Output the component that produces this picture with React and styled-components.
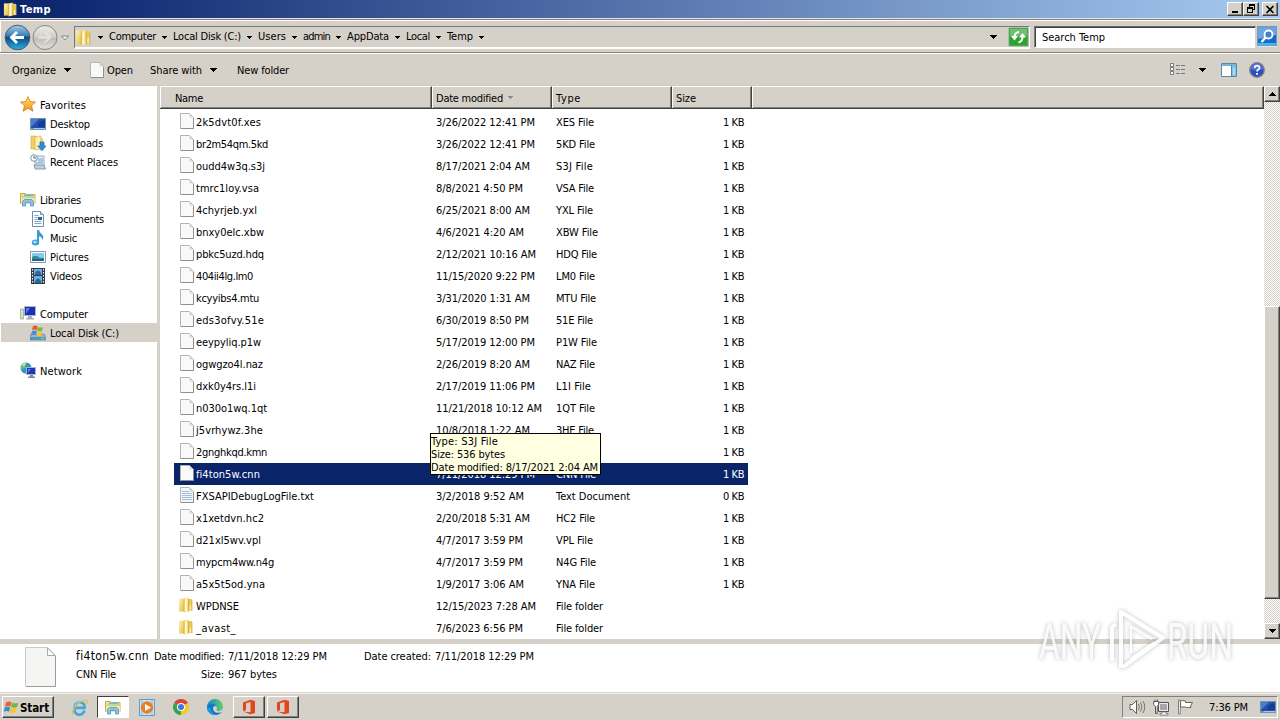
import React, { useLayoutEffect, useRef } from "react";
import styled, { createGlobalStyle, css } from "styled-components";

const face = "#d5d0c8";

const Global = createGlobalStyle`
  * { box-sizing: border-box; }
  html, body { margin: 0; padding: 0; overflow: hidden; }
  body { font-family: "DejaVu Sans Condensed", "DejaVu Sans", sans-serif; font-size: 11px; color: #000; background: ${face}; }
  svg { display: block; flex: none; }
`;

const raised = css`
  background: ${face};
  border: 1px solid;
  border-color: #fff #404040 #404040 #fff;
  box-shadow: inset -1px -1px 0 #808080;
`;

const Screen = styled.div`
  position: relative;
  width: 1280px;
  height: 720px;
  display: flex;
  flex-direction: column;
  overflow: hidden;
  background: ${face};
`;

const Label = styled.span`
  display: inline-block;
  flex: none;
  white-space: pre;
  line-height: ${(p) => (p.$up ? 14 : 16)}px;
  height: 14px;
  width: ${(p) => p.$w}px;
  font-size: ${(p) => p.$size || 11}px;
  font-weight: ${(p) => (p.$bold ? 700 : 400)};
`;

/* Spreads the characters so the string fills exactly `w` pixels. */
function Text({ w, size, bold, up, children }) {
  const ref = useRef(null);
  useLayoutEffect(() => {
    const el = ref.current;
    el.style.letterSpacing = "0px";
    const range = document.createRange();
    range.selectNodeContents(el);
    const natural = range.getBoundingClientRect().width;
    el.style.letterSpacing = `${(w - natural) / children.length}px`;
  }, [w, children]);
  return <Label ref={ref} $w={w} $size={size} $bold={bold} $up={up}>{children}</Label>;
}

/* ---------- title bar ---------- */
const TitleBar = styled.header`
  height: 18px;
  flex: none;
  display: flex;
  align-items: center;
  padding: 0 2px 0 3px;
  color: #fff;
  background: linear-gradient(90deg, #0a246a 0%, #0f2a72 6%, #a6caf0 100%);
`;
const TitleText = styled.div`flex: 1; padding-left: 2px; display: flex;`;
const WindowButton = styled.div`
  ${raised}
  width: 16px;
  height: 14px;
  margin-left: ${(p) => p.$gap || 0}px;
  display: flex;
  align-items: center;
  justify-content: center;
`;

/* ---------- navigation ---------- */
const NavBar = styled.div`
  height: 36px;
  flex: none;
  display: flex;
  align-items: flex-start;
  border-top: 1px solid #e8e6e2;
  border-bottom: 1px solid #fff;
  box-shadow: inset 0 1px 0 #808080, inset 0 2px 0 #fff, inset 0 -1px 0 #85837e, inset 1px 0 0 #fff;
  padding: 5px 2px 0 4px;
`;
const NavButtons = styled.div`display: flex; align-items: center; gap: 1px; width: 70px; height: 27px;`;
const AddressBar = styled.div`
  width: 956px;
  height: 23px;
  margin-top: 2px;
  display: flex;
  align-items: center;
  border: 1px solid;
  border-color: #73797b #fff #fff #73797b;
  border-bottom-width: 2px;
`;
const CrumbArrow = styled.div`
  width: ${(p) => p.$w || 17}px;
  flex: none;
  display: flex;
  justify-content: center;
`;
const Spacer = styled.div`flex: 1;`;
const SearchBox = styled.div`
  width: 222px;
  height: 22px;
  margin: 2px 1px 0 4px;
  padding-left: 7px;
  display: flex;
  align-items: center;
  background: #fff;
  border: 1px solid;
  border-color: #666 #d4d0c8 #fff #808080;
  box-shadow: inset 1px 1px 0 #404040;
`;
const SearchButton = styled.div`margin-top: 2px;`;

/* ---------- command bar ---------- */
const CommandBar = styled.div`
  height: 32px;
  flex: none;
  display: flex;
  align-items: center;
  padding: 0 15px 0 12px;
  border-bottom: 1px solid #cfcbc3;
`;
const Command = styled.div`
  display: flex;
  align-items: center;
  gap: ${(p) => p.$gap || 0}px;
  margin-right: ${(p) => p.$after || 0}px;
`;

/* ---------- body ---------- */
const Body = styled.main`display: flex; height: 553px; flex: none; background: #fff;`;
const Sidebar = styled.nav`
  width: 160px;
  flex: none;
  padding: 9px 0 0 1px;
  border-right: 3px solid ${face};
`;
const TreeItem = styled.div`
  height: 19px;
  display: flex;
  align-items: center;
  gap: 4px;
  padding-left: ${(p) => (p.$child ? 29 : 19)}px;
  background: ${(p) => (p.$selected ? "#d5d0c8" : "transparent")};
  & > svg { margin-bottom: ${(p) => (p.$child ? 0 : 1)}px; }
`;
const FilePane = styled.section`width: 1104px; flex: none; display: flex; flex-direction: column;`;
const HeaderRow = styled.div`
  display: flex;
  height: 23px;
  flex: none;
  background: ${face};
  border-bottom: 1px solid #404040;
  box-shadow: inset 0 -1px 0 #808080;
`;
const HeaderCell = styled.div`
  width: ${(p) => p.$w}px;
  padding: 1px 0 1px ${(p) => p.$pad || 4}px;
  display: flex;
  align-items: center;
  gap: 5px;
  border: solid;
  border-width: 1px 1px 0 1px;
  border-color: #fff #404040 #404040 #fff;
  box-shadow: inset -1px -1px 0 #808080;
`;
const Rows = styled.div`padding: 2px 0 0 14px; flex: 1;`;
const FileRow = styled.div`
  display: flex;
  align-items: center;
  width: 574px;
  height: 22px;
  padding-left: 4px;
  color: ${(p) => (p.$selected ? "#fff" : "#000")};
  background: ${(p) => (p.$selected ? "#0a246a" : "transparent")};
`;
const NameCell = styled.div`
  width: 258px;
  display: flex;
  align-items: center;
`;
const IconSlot = styled.div`
  width: 18px;
  flex: none;
  display: flex;
  padding: 0 0 2px ${(p) => p.$inset || 0}px;
`;
const DateCell = styled.div`width: 120px; display: flex;`;
const TypeCell = styled.div`width: 120px; display: flex;`;
const SizeCell = styled.div`flex: 1; display: flex; justify-content: flex-end; padding-right: 4px;`;

const ScrollBar = styled.div`
  width: 16px;
  display: flex;
  flex-direction: column;
  background: conic-gradient(#fff 25%, #d4d0c8 0 50%, #fff 0 75%, #d4d0c8 0) 0 0 / 2px 2px;
`;
const ScrollButton = styled.div`
  ${raised}
  height: 16px;
  display: flex;
  align-items: center;
  justify-content: center;
`;
const TrackAbove = styled.div`height: 204px;`;
const Thumb = styled.div`${raised} height: 293px;`;

/* ---------- details ---------- */
const Details = styled.section`
  height: 54px;
  flex: none;
  display: flex;
  background: #fff;
  border-top: 5px solid ${face};
  border-bottom: 1px solid #d8d4cc;
  padding-left: 25px;
`;
const DetailIcon = styled.div`width: 51px; padding-top: 3px;`;
const DetailColumn = styled.div`
  display: flex;
  flex-direction: column;
  align-items: ${(p) => (p.$end ? "flex-end" : "flex-start")};
  gap: 4px;
  padding-top: 5px;
  width: ${(p) => p.$w}px;
`;
const DetailLine = styled.div`display: flex; height: 14px; gap: 4px;`;
const DetailLineTop = styled(DetailLine)`padding-top: 5px;`;
const DetailValue = styled.div`padding-left: 4px; height: 14px; display: flex;`;

/* ---------- taskbar ---------- */
const Taskbar = styled.footer`
  height: 27px;
  flex: none;
  display: flex;
  align-items: center;
  border-top: 1px solid #f6f4f1;
  padding: 0 2px 0 2px;
`;
const StartButton = styled.div`
  ${raised}
  width: 52px;
  height: 22px;
  display: flex;
  align-items: center;
  padding-left: 1px;
  gap: 1px;
  margin-right: 9px;
`;
const TaskButton = styled.div`
  width: 32px;
  height: 22px;
  margin-right: 2px;
  display: flex;
  align-items: center;
  justify-content: center;
  ${(p) => p.$kind === "raised" && raised}
  ${(p) => p.$kind === "pressed" && css`
    background: #fff;
    border: 1px solid;
    border-color: #404040 #fff #fff #404040;
  `}
`;
const Tray = styled.div`
  width: 156px;
  height: 22px;
  display: flex;
  align-items: center;
  padding-left: 6px;
  border: 1px solid;
  border-color: #808080 #fff #fff #808080;
`;
const TrayItem = styled.div`width: ${(p) => p.$w}px; display: flex;`;

/* ---------- overlays ---------- */
const Tooltip = styled.div`
  position: absolute;
  left: 430px;
  top: 433px;
  width: 171px;
  height: 42px;
  display: flex;
  flex-direction: column;
  border: 1px solid #000;
  background: #ffffe1;
`;
const TipLine = styled.div`height: 13px; display: flex;`;
const Watermark = styled.div`position: absolute; left: 1030px; top: 600px;`;

/* ---------- icons ---------- */
const Triangle = ({ color = "#000", s = 7 }) => {
  const h = (s + 1) / 2;
  return (
    <svg width={s} height={h} shapeRendering="crispEdges">
      {Array.from({ length: h }, (_, i) => (
        <rect key={i} x={i} y={i} width={s - 2 * i} height="1" fill={color} />
      ))}
    </svg>
  );
};
const FolderIcon = ({ s = 16 }) => (
  <svg width={s} height={s} viewBox="0 0 16 16">
    <defs>
      <linearGradient id="folder" x1="0" y1="0" x2="1" y2="1">
        <stop offset="0" stopColor="#fdf3b0" /><stop offset="1" stopColor="#e2bc3d" />
      </linearGradient>
    </defs>
    <path d="M1 1.500h6v13H1z" fill="url(#folder)" />
    <path d="M6 1.500L10.500.500v14L6 15.500z" fill="#f5df7d" />
    <path d="M10 2h4v12h-4z" fill="#e9cb5c" />
    <path d="M7 2.500l1.800-.4v12.200L7 14.800z" fill="#fffbe0" />
    <path d="M6 2v13M10.500 2v12.500M14 3v11" stroke="#d0a93c" strokeWidth=".7" />
    <path d="M11.800 8.500h1.200v5h-1.200z" fill="#fff4bd" />
  </svg>
);
const FileIcon = ({ lines }) => (
  <svg width="14" height="16" viewBox="0 0 14 16">
    <path d="M.5.500h9l4 4v11H.5z" fill={lines ? "#f1f6fb" : "#f9f9f9"} stroke="#b4b4b4" />
    <path d="M1 15.500h12.500V5" fill="none" stroke="#8f8f8f" />
    <path d="M9.500 1v3.500H13z" fill="#d5d5d5" />
    {lines && <path d="M2 4.500h7M2 6.500h10M2 8.500h10M2 10.500h10M2 12.500h10" stroke="#a4bed4" />}
  </svg>
);
const BigFile = () => (
  <svg width="32" height="41" viewBox="0 0 32 41">
    <path d="M.5.500h22l8 8v31H.5z" fill="#f5f5f4" stroke="#c9c9c7" />
    <path d="M1 39.500h29.500V9" fill="none" stroke="#9c9c9a" />
    <path d="M22.500 1v7.500h7.500z" fill="#fff" stroke="#a8a8a6" />
  </svg>
);
const BackIcon = () => (
  <svg width="27" height="27" viewBox="0 0 27 27">
    <defs>
      <linearGradient id="back" x1="0" y1="0" x2="0" y2="1">
        <stop offset="0" stopColor="#a5cbe4" /><stop offset=".42" stopColor="#3c82b4" />
        <stop offset=".5" stopColor="#0a4a86" /><stop offset="1" stopColor="#25b4e8" />
      </linearGradient>
    </defs>
    <circle cx="13.500" cy="13.500" r="12.300" fill="url(#back)" stroke="#46586b" />
    <path d="M20 13.500H8M13 8l-5.500 5.500L13 19" stroke="#fff" strokeWidth="2.800" fill="none" />
  </svg>
);
const ForwardIcon = () => (
  <svg width="27" height="27" viewBox="0 0 27 27">
    <defs>
      <linearGradient id="fwd" x1="0" y1="0" x2="0" y2="1">
        <stop offset="0" stopColor="#eeece9" /><stop offset=".48" stopColor="#d2cfca" />
        <stop offset=".52" stopColor="#bfbcb7" /><stop offset="1" stopColor="#e3e1dd" />
      </linearGradient>
    </defs>
    <circle cx="13" cy="13.500" r="12" fill="url(#fwd)" stroke="#858585" />
    <path d="M6.500 13.500h12M13 8l5.500 5.500L13 19" stroke="#e4e2de" strokeWidth="2.400" fill="none" />
    <path d="M13.500 20.300l6.500-6.800" stroke="#aaa7a2" strokeWidth=".7" />
  </svg>
);
const DownHollow = () => (
  <svg width="9" height="6" viewBox="0 0 9 6"><path d="M1.500 1h7L5 5z" fill="#eee" stroke="#777" strokeWidth=".8" /></svg>
);
const RefreshIcon = () => (
  <svg width="21" height="20" viewBox="0 0 21 20">
    <rect width="21" height="20" fill="#d9e8d4" />
    <rect x="1" y="1" width="19" height="18" fill="#2ea32e" stroke="#7c9e7c" />
    <rect x="2" y="2" width="17" height="7" fill="#6fbf6d" />
    <path d="M3 9h7l-3.500 4.500z" fill="#fff" />
    <path d="M6.500 10q0-4.500 4.500-5" stroke="#fff" strokeWidth="2" fill="none" />
    <path d="M11 10.500h7L14.500 6z" fill="#fff" />
    <path d="M14.500 10q0 4.500-4 5.500" stroke="#fff" strokeWidth="2" fill="none" />
  </svg>
);
const SearchIcon = () => (
  <svg width="20" height="21" viewBox="0 0 20 21">
    <rect width="20" height="21" fill="#dbe6f4" />
    <rect x=".5" y=".5" width="19" height="19" fill="#1968cb" stroke="#7795bd" />
    <path d="M1 1h18v8L1 13z" fill="#6fa3df" />
    <path d="M1 17h18v2H1z" fill="#35bef0" />
    <circle cx="11.500" cy="8.500" r="4" fill="#3d7fc9" stroke="#fff" strokeWidth="1.800" />
    <path d="M8.500 11.500L4.500 16" stroke="#fff" strokeWidth="2.500" />
  </svg>
);
const ViewIcon = () => (
  <svg width="16" height="13" viewBox="0 0 16 13">
    <g fill="#fff" stroke="#7a7a7a"><path d="M.5.500h3v3h-3zM.5 4.500h3v3h-3zM.5 8.500h3v3h-3z" /></g>
    <path d="M6 2.500h4M11 2.500h4M6 6.500h4M11 6.500h4M6 10.500h4M11 10.500h4" stroke="#7a7a7a" />
  </svg>
);
const PreviewIcon = () => (
  <svg width="16" height="14" viewBox="0 0 16 14">
    <path d="M.5.500h15v13H.5z" fill="#fff" stroke="#5689a6" />
    <path d="M1 1h14v2H1z" fill="#76b9dc" /><path d="M10 3h5v10h-5z" fill="#7fc1e2" />
    <path d="M10.500 2v11" stroke="#4789ae" /><path d="M13 5v7" stroke="#d9f3ff" />
  </svg>
);
const HelpIcon = () => (
  <svg width="16" height="16" viewBox="0 0 16 16">
    <circle cx="8" cy="8" r="7.300" fill="#2d50bd" stroke="#80858f" strokeWidth="1.300" />
    <path d="M2 7a6 6 0 0112 0q-6 3-12 0z" fill="#5573cc" />
    <path d="M5.700 6c0-3 4.800-3 4.800-.300C10.500 7.500 8 7.500 8 9.600" fill="none" stroke="#fff" strokeWidth="1.700" />
    <path d="M7.100 11h1.900v1.800H7.100z" fill="#fff" />
  </svg>
);
const ExplorerIcon = () => (
  <svg width="16" height="16" viewBox="0 0 16 16">
    <path d="M.5 2.500h5l1 1h8.500v9H.5z" fill="#f4df8b" stroke="#cda846" />
    <path d="M2 5h12v2H2z" fill="#b7dd96" /><path d="M4 3.500h9v1.500H4z" fill="#76b6dd" />
    <path d="M1 7h14v6H1z" fill="#f7e69d" />
    <path d="M2.500 15v-4.500l2-2h7l2 2V15h-3v-3.500h-5V15z" fill="#85c5eb" stroke="#4d96c6" strokeWidth=".8" />
  </svg>
);
const art = {
  star: <><defs><linearGradient id="star" x1="0" y1="0" x2="0" y2="1"><stop stopColor="#ffea6e" /><stop offset="1" stopColor="#f68b1f" /></linearGradient></defs><path d="M8 .5l2.200 5.100 5.400.4-4.100 3.600 1.400 5.700L8 12.200l-4.900 3.100 1.400-5.700L.4 6l5.400-.4z" fill="url(#star)" stroke="#dd7c1d" strokeWidth=".8" /></>,
  desktop: <><path d="M.5 2.500h15v11H.5z" fill="#244fae" stroke="#6c93bd" /><path d="M1 3h8L1 11z" fill="#4a7dcc" /><path d="M9 6l6-2v7H7z" fill="#173d94" /><path d="M1 12h14v1H1z" fill="#a7c8e2" /><path d="M1.500 12h2v1h-2z" fill="#5b9a44" /></>,
  downloads: <><path d="M1 1h5v13H1z" fill="#edcf67" stroke="#d3ac43" strokeWidth=".6" /><path d="M5 2l6-1v13l-6 1z" fill="#fbedaa" stroke="#d3ac43" strokeWidth=".6" /><path d="M10 3h3v10h-3z" fill="#ecd06b" /><path d="M10 7h4v4h2L12 15.700 7.700 11H10z" fill="#2b8ed9" stroke="#1667a9" strokeWidth=".7" /></>,
  recent: <><path d="M5 2h9v11H5z" fill="#e4eef7" stroke="#879bb0" strokeWidth=".8" /><path d="M8 5h5M8 7h5M6 9h7" stroke="#7aa0c4" /><path d="M4 11h10l1.500 4H5z" fill="#bed0e1" stroke="#748ca5" strokeWidth=".8" /><circle cx="4" cy="4" r="3.300" fill="#f4f8fb" stroke="#8095aa" /><path d="M4 2v2h2" stroke="#4c6480" fill="none" /></>,
  documents: <><path d="M2.500.500h8l3 3v12h-11z" fill="#fff" stroke="#6f8eb0" /><path d="M10.500.500v3h3" fill="#d7e3ee" stroke="#6f8eb0" /><path d="M4.500 4.500h4M4.500 6.500h3M4.500 8.500h3M4.500 10.500h7M4.500 12.500h7" stroke="#82a5ca" /><path d="M8 6h4v3H8z" fill="#355f91" /></>,
  music: <><path d="M7 0h2q.5 2.500 3 4.500 2.500 2.500.5 5.500Q12 6.500 9 6.500V13H7z" fill="#3d9ad5" /><ellipse cx="5.500" cy="12.500" rx="3.700" ry="3" fill="#3a9edc" /><ellipse cx="5" cy="12" rx="2" ry="1.200" fill="#a8dbf5" /></>,
  pictures: <><path d="M.5 2.500h15v11H.5z" fill="#fff" stroke="#8099a8" /><path d="M2 4h12v8H2z" fill="#8bcaf0" /><path d="M2 8q4-3 8 1 2-1 4 0v3H2z" fill="#348f9b" /><path d="M2 10h12v2H2z" fill="#1f658a" /></>,
  videos: <><path d="M1 0h14v16H1z" fill="#343b44" /><path d="M4 1h8v6H4zM4 8h8v7H4z" fill="#6baee0" /><path d="M5 5q3-5 6 0v2H5zM5 13q3-5 6 0v2H5z" fill="#2467a2" /><path d="M2.500 1v15M13.500 1v15" stroke="#fff" strokeDasharray="1.500 1.500" /></>,
  computer: <><path d="M.5 4h3v10h-3z" fill="#d5e4c0" stroke="#8c9b8b" strokeWidth=".7" /><path d="M4.500 1.500h11v9h-11z" fill="#1c2fb4" stroke="#b1b6c6" /><path d="M6 3h4L6 9z" fill="#5c78e8" /><path d="M8 11h4v2H8zM6 13h8v1.500H6z" fill="#a8acb5" /></>,
  disk: <><path d="M1 9h13l2 3v3H0v-3z" fill="#9db4c1" stroke="#70848d" strokeWidth=".7" /><path d="M0 12h15v3H0z" fill="#4d98bd" /><path d="M11 13h3v1h-3z" fill="#7df06d" /><path d="M3 1q3-1 4.500.5L7 5Q5 4 2 5z" fill="#e9582c" /><path d="M8 2q3 1 5 0l-1 4q-2 1-5-.5z" fill="#7ebb32" /><path d="M2 6q3-1 5 0l-.7 4Q4 9 1 10z" fill="#438fda" /><path d="M7 6.500q3 1 5 .2l-1 4q-2 1-4.500-.5z" fill="#f7ca35" /></>,
  network: <><circle cx="6" cy="6" r="5.500" fill="#2f94c8" /><path d="M1 4q3-4 6-3Q5 4 6 6q-3 0-5 2zM7 7q3 0 2 4H6z" fill="#6dbf72" /><path d="M2 3q2-2 4-2L4 4z" fill="#d5f1e1" /><path d="M6.500 5.500h9v7h-9z" fill="#1c38b9" stroke="#aab5cf" /><path d="M8 7h3l-3 4z" fill="#617fe0" /><path d="M10 13h3v1.500h2V16H8v-1.500h2z" fill="#7c8799" /></>,
};
const SmallIcon = ({ name }) => name === "libraries" ? <ExplorerIcon /> : <svg width="16" height="16" viewBox="0 0 16 16">{art[name]}</svg>;
const StartLogo = () => (
  <svg width="15" height="15" viewBox="0 0 15 15">
    <path d="M2 2.500Q5 .500 7.500 2.300L6.300 6.500Q4 5.200 1 6.800z" fill="#ed6030" />
    <path d="M8.300 2.500Q11 4.200 14.500 2.700L13 7Q10.500 8.500 7 6.700z" fill="#72b840" />
    <path d="M.8 7.500Q4 5.900 6.200 7.400L5 11.700Q3 10.300 0 11.800z" fill="#348cd5" />
    <path d="M6.900 7.600Q10 9.300 12.800 7.900L11.500 12.300Q8.500 13.800 5.700 12z" fill="#f8c52d" />
  </svg>
);
const IEIcon = () => (
  <svg width="17" height="17" viewBox="0 0 17 17">
    <path d="M13.300 11.500A5 5 0 113.700 8.900h9.900q.2-5.300-4.900-5.600-4.400.2-5 4.600" fill="none" stroke="#3fa6e0" strokeWidth="2.600" />
    <path d="M2.500 15.500C-1 15 4 6 11 2q4-2 5 0 .5 1-1 3" fill="none" stroke="#e3bd43" strokeWidth="1.200" />
    <path d="M4 7.500q1-4.500 5-4.800" stroke="#a4dff9" fill="none" />
  </svg>
);
const PlayerIcon = () => (
  <svg width="16" height="17" viewBox="0 0 16 17">
    <path d="M.5.500h15v16H.5z" fill="#c8e4f6" stroke="#5e9bc7" />
    <path d="M3 1v15M13 1v15" stroke="#80b9df" /><circle cx="8" cy="8.500" r="5.700" fill="#ef7f1d" stroke="#cf7627" strokeWidth=".8" />
    <path d="M6 5l6 3.500L6 12z" fill="#fff" />
  </svg>
);
const ChromeIcon = () => (
  <svg width="16" height="16" viewBox="0 0 16 16">
    <path d="M8 8L1.070 4A8 8 0 0114.930 4z" fill="#df4334" />
    <path d="M8 8L14.930 4A8 8 0 018 16z" fill="#f8c82f" />
    <path d="M8 8v8A8 8 0 011.070 4z" fill="#32a257" />
    <path d="M8 4h6.900L8 8zM11.460 10L8 16V8zM4.500 10L1.100 4 8 8z" fill="#f8c82f" />
    <path d="M8 4h6.930L10 6z" fill="#df4334" /><path d="M4.500 10L1.070 4 6 6z" fill="#32a257" />
    <circle cx="8" cy="8" r="4" fill="#fff" /><circle cx="8" cy="8" r="3" fill="#3b78df" />
  </svg>
);
const EdgeIcon = () => (
  <svg width="16" height="16" viewBox="0 0 16 16">
    <defs><linearGradient id="edge"><stop stopColor="#1686cf" /><stop offset="1" stopColor="#63cf62" /></linearGradient></defs>
    <path d="M0 8a8 8 0 0116 0c0 3-2.500 4-4.500 4C9 12 9.700 10 10 9 9.800 6 4 5 0 8z" fill="url(#edge)" />
    <path d="M0 8c2-4 7-4 9-1-4-1-4 5 0 6.500 2.500.8 4.500 0 6-.8C12 17 6 16.700 3 14.300 1 12.600 0 10.500 0 8z" fill="#1477c7" />
    <path d="M4 9c-1 3 2 7 6 6.800C6 16.800 0 14 0 9z" fill="#1d9be0" />
  </svg>
);
const OfficeIcon = () => (
  <svg width="14" height="16" viewBox="0 0 14 16">
    <path d="M1 3.500L8.500.7 13 2v12l-4.500 1.300L1 12.500l7.500.8V3L4 4.200V11L1 12.300z" fill="#e4451d" />
  </svg>
);
const VolumeIcon = () => (
  <svg width="17" height="16" viewBox="0 0 17 16">
    <path d="M1 5.500h2.500L7.500 1.500v13l-4-4H1z" fill="#fff" stroke="#5c5c5c" />
    <path d="M9.500 5q1.500 3 0 6M11.500 3.500q3 4.500 0 9M14 2q3.500 6 0 12" fill="none" stroke="#777" />
  </svg>
);
const LanIcon = () => (
  <svg width="17" height="17" viewBox="0 0 17 17">
    <path d="M5.500 3.500h10v9h-10z" fill="#a6a6a6" stroke="#555" /><path d="M6.500 4.500h8v7h-8z" fill="none" stroke="#eee" />
    <path d="M9 13h4v1.500h2v1.500H7v-1.500h2z" fill="#fff" stroke="#666" strokeWidth=".7" />
    <path d="M2 3V.5M4.500 3V.5" stroke="#555" /><path d="M.7 2.500h5v3l-1.500 2v7H2.500v-7L.7 5.500z" fill="#fff" stroke="#555" />
  </svg>
);
const FlagIcon = () => (
  <svg width="17" height="16" viewBox="0 0 17 16">
    <path d="M1.500 1h1.800v14H1.500z" fill="#fff" stroke="#666" strokeWidth=".8" />
    <path d="M3.500 2q2-1 5 0v1.500h7L13.500 7l.5 1.500q-2.500.3-4.500-.2L8 8H3.500z" fill="#fff" stroke="#666" />
  </svg>
);
const AnyRunMark = () => (
  <svg width="210" height="84" viewBox="0 0 210 84">
    <defs><filter id="soft" x="-20%" y="-20%" width="140%" height="140%"><feDropShadow dx="0" dy="0" stdDeviation="2.300" floodColor="#777" floodOpacity=".58" /></filter></defs>
    <g filter="url(#soft)" fill="#fafafa" opacity=".88" fontFamily="Roboto, sans-serif" fontSize="50">
      <text x="9" y="59" textLength="62" lengthAdjust="spacingAndGlyphs">ANY</text>
      <text x="137" y="59" textLength="66" lengthAdjust="spacingAndGlyphs">RUN</text>
      <path d="M82 61V27l4-3M91 68V12l42 26-40 29M101 60l24-17" fill="none" stroke="#fff" strokeWidth="4" strokeLinejoin="round" />
      <path d="M101 26v27M100 26l22 13" fill="none" stroke="#fff" strokeWidth="2" />
    </g>
  </svg>
);

/* ---------- data ---------- */
const crumbs = [["Computer", 47], ["Local Disk (C:)", 68], ["Users", 28], ["admin", 27], ["AppData", 42], ["Local", 24], ["Temp", 26]];

const tree = [
  ["star", "Favorites", 46], ["desktop", "Desktop", 40, 1], ["downloads", "Downloads", 53, 1], ["recent", "Recent Places", 68, 1], null,
  ["libraries", "Libraries", 41], ["documents", "Documents", 54, 1], ["music", "Music", 27, 1], ["pictures", "Pictures", 39, 1], ["videos", "Videos", 32, 1], null,
  ["computer", "Computer", 48], ["disk", "Local Disk (C:)", 69, 1, 1], null,
  ["network", "Network", 42],
];

const files = [
  ["2k5dvt0f.xes", 65, "3/26/2022 12:41 PM", 99, "XES File", 38],
  ["br2m54qm.5kd", 72, "3/26/2022 12:41 PM", 99, "5KD File", 39],
  ["oudd4w3q.s3j", 69, "8/17/2021 2:04 AM", 94, "S3J File", 37],
  ["tmrc1loy.vsa", 63, "8/8/2021 4:50 PM", 87, "VSA File", 38],
  ["4chyrjeb.yxl", 61, "6/25/2021 8:00 AM", 94, "YXL File", 37],
  ["bnxy0elc.xbw", 68, "4/6/2021 4:20 AM", 88, "XBW File", 42],
  ["pbkc5uzd.hdq", 68, "2/12/2021 10:16 AM", 100, "HDQ File", 41],
  ["404ii4lg.lm0", 57, "11/15/2020 9:22 PM", 99, "LM0 File", 39],
  ["kcyyibs4.mtu", 63, "3/31/2020 1:31 AM", 94, "MTU File", 40],
  ["eds3ofvy.51e", 68, "6/30/2019 8:50 PM", 93, "51E File", 37],
  ["eeypyliq.p1w", 65, "5/17/2019 12:00 PM", 99, "P1W File", 41],
  ["ogwgzo4l.naz", 67, "2/26/2019 8:20 AM", 94, "NAZ File", 39],
  ["dxk0y4rs.l1i", 60, "2/17/2019 11:06 PM", 99, "L1I File", 35],
  ["n030o1wq.1qt", 71, "11/21/2018 10:12 AM", 106, "1QT File", 39],
  ["j5vrhywz.3he", 67, "10/8/2018 1:22 AM", 94, "3HE File", 38],
  ["2gnghkqd.kmn", 71, "", 0, "", 0],
  ["fi4ton5w.cnn", 64, "7/11/2018 12:29 PM", 99, "CNN File", 40],
  ["FXSAPIDebugLogFile.txt", 118, "3/2/2018 9:52 AM", 88, "Text Document", 74],
  ["x1xetdvn.hc2", 68, "2/20/2018 5:31 AM", 94, "HC2 File", 39],
  ["d21xl5wv.vpl", 65, "4/7/2017 3:59 PM", 87, "VPL File", 37],
  ["mypcm4ww.n4g", 78, "4/7/2017 3:59 PM", 87, "N4G File", 40],
  ["a5x5t5od.yna", 69, "1/9/2017 3:06 AM", 88, "YNA File", 39],
  ["WPDNSE", 43, "12/15/2023 7:28 AM", 100, "File folder", 47],
  ["_avast_", 40, "7/6/2023 6:56 PM", 87, "File folder", 47],
];

function FileEntry({ row }) {
  const [name, nw, date, dw, type, tw] = row;
  const folder = type === "File folder";
  return (
    <FileRow $selected={name === "fi4ton5w.cnn"}>
      <NameCell>
        <IconSlot $inset={folder ? 0 : 2}>
          {folder ? <FolderIcon /> : <FileIcon lines={type === "Text Document"} />}
        </IconSlot>
        <Text w={nw}>{name}</Text>
      </NameCell>
      <DateCell>{date && <Text w={dw}>{date}</Text>}</DateCell>
      <TypeCell>{type && <Text w={tw}>{type}</Text>}</TypeCell>
      <SizeCell>{!folder && <Text w={21}>{type === "Text Document" ? "0 KB" : "1 KB"}</Text>}</SizeCell>
    </FileRow>
  );
}

export default function App() {
  return (
    <Screen>
      <Global />
      <TitleBar>
        <FolderIcon s={15} />
        <TitleText><Text w={31} bold>Temp</Text></TitleText>
        <WindowButton><svg width="10" height="9"><path d="M2 6h6v2H2z" /></svg></WindowButton>
        <WindowButton><svg width="10" height="10" shapeRendering="crispEdges"><path d="M3 0h6v6H7V5h1V2H4v1H3zM1 3h6v6H1zM2 5v3h4V5z" fillRule="evenodd" /></svg></WindowButton>
        <WindowButton $gap={3}><svg width="10" height="9"><path d="M1.500 1l7 7M8.500 1l-7 7" stroke="#000" strokeWidth="1.700" /></svg></WindowButton>
      </TitleBar>

      <NavBar>
        <NavButtons><BackIcon /><ForwardIcon /><DownHollow /></NavButtons>
        <AddressBar>
          <FolderIcon s={17} />
          <CrumbArrow $w={17}><Triangle s={5} /></CrumbArrow>
          {crumbs.map(([label, w]) => (
            <React.Fragment key={label}>
              <Text w={w} up>{label}</Text>
              <CrumbArrow><Triangle s={5} /></CrumbArrow>
            </React.Fragment>
          ))}
          <Spacer />
          <CrumbArrow $w={30}><Triangle /></CrumbArrow>
          <RefreshIcon />
        </AddressBar>
        <SearchBox><Text w={63}>Search Temp</Text></SearchBox>
        <SearchButton><SearchIcon /></SearchButton>
      </NavBar>

      <CommandBar>
        <Command $gap={8} $after={19}><Text w={44}>Organize</Text><Triangle /></Command>
        <Command $gap={3} $after={17}><FileIcon /><Text w={26}>Open</Text></Command>
        <Command $gap={8} $after={20}><Text w={52}>Share with</Text><Triangle /></Command>
        <Text w={52}>New folder</Text>
        <Spacer />
        <Command $gap={13} $after={15}><ViewIcon /><Triangle /></Command>
        <Command $gap={12}><PreviewIcon /><HelpIcon /></Command>
      </CommandBar>

      <Body>
        <Sidebar>
          {tree.map((item, i) => item ? (
            <TreeItem key={i} $child={item[3]} $selected={item[4]}>
              <SmallIcon name={item[0]} />
              <Text w={item[2]}>{item[1]}</Text>
            </TreeItem>
          ) : <TreeItem key={i} />)}
        </Sidebar>
        <FilePane>
          <HeaderRow>
            <HeaderCell $w={272} $pad={14}><Text w={28}>Name</Text></HeaderCell>
            <HeaderCell $w={120} $pad={3}><Text w={67}>Date modified</Text><Triangle s={5} color="#888" /></HeaderCell>
            <HeaderCell $w={120} $pad={3}><Text w={25}>Type</Text></HeaderCell>
            <HeaderCell $w={80} $pad={3}><Text w={20}>Size</Text></HeaderCell>
            <HeaderCell $w={512} />
          </HeaderRow>
          <Rows>{files.map((row) => <FileEntry key={row[0]} row={row} />)}</Rows>
        </FilePane>
        <ScrollBar>
          <ScrollButton><svg width="7" height="4" shapeRendering="crispEdges"><path d="M3 0h1v1h1v1h1v1h1v1H0V3h1V2h1V1h1z" /></svg></ScrollButton>
          <TrackAbove />
          <Thumb />
          <Spacer />
          <ScrollButton><Triangle /></ScrollButton>
        </ScrollBar>
      </Body>

      <Details>
        <DetailIcon><BigFile /></DetailIcon>
        <DetailColumn $w={78}><Text w={73} size={12} up>fi4ton5w.cnn</Text><Text w={40}>CNN File</Text></DetailColumn>
        <DetailColumn $w={70} $end><Text w={70}>Date modified:</Text><Text w={23}>Size:</Text></DetailColumn>
        <DetailColumn $w={136}>
          <DetailValue><Text w={99}>7/11/2018 12:29 PM</Text></DetailValue>
          <DetailValue><Text w={49}>967 bytes</Text></DetailValue>
        </DetailColumn>
        <DetailLineTop><DetailValue><Text w={67}>Date created:</Text></DetailValue><Text w={99}>7/11/2018 12:29 PM</Text></DetailLineTop>
      </Details>

      <Taskbar>
        <StartButton><StartLogo /><Text w={29} bold size={11.5}>Start</Text></StartButton>
        <TaskButton><IEIcon /></TaskButton>
        <TaskButton $kind="pressed"><ExplorerIcon /></TaskButton>
        <TaskButton><PlayerIcon /></TaskButton>
        <TaskButton><ChromeIcon /></TaskButton>
        <TaskButton><EdgeIcon /></TaskButton>
        <TaskButton $kind="raised"><OfficeIcon /></TaskButton>
        <TaskButton $kind="raised"><OfficeIcon /></TaskButton>
        <Spacer />
        <Tray>
          <TrayItem $w={24}><VolumeIcon /></TrayItem>
          <TrayItem $w={24}><LanIcon /></TrayItem>
          <TrayItem $w={32}><FlagIcon /></TrayItem>
          <TrayItem $w={51}><Text w={39}>7:36 PM</Text></TrayItem>
          <SmallIcon name="desktop" />
        </Tray>
      </Taskbar>

      <Tooltip>
        <TipLine><Text w={67}>Type: S3J File</Text></TipLine>
        <TipLine><Text w={74}>Size: 536 bytes</Text></TipLine>
        <TipLine><Text w={167}>Date modified: 8/17/2021 2:04 AM</Text></TipLine>
      </Tooltip>
      <Watermark><AnyRunMark /></Watermark>
    </Screen>
  );
}
